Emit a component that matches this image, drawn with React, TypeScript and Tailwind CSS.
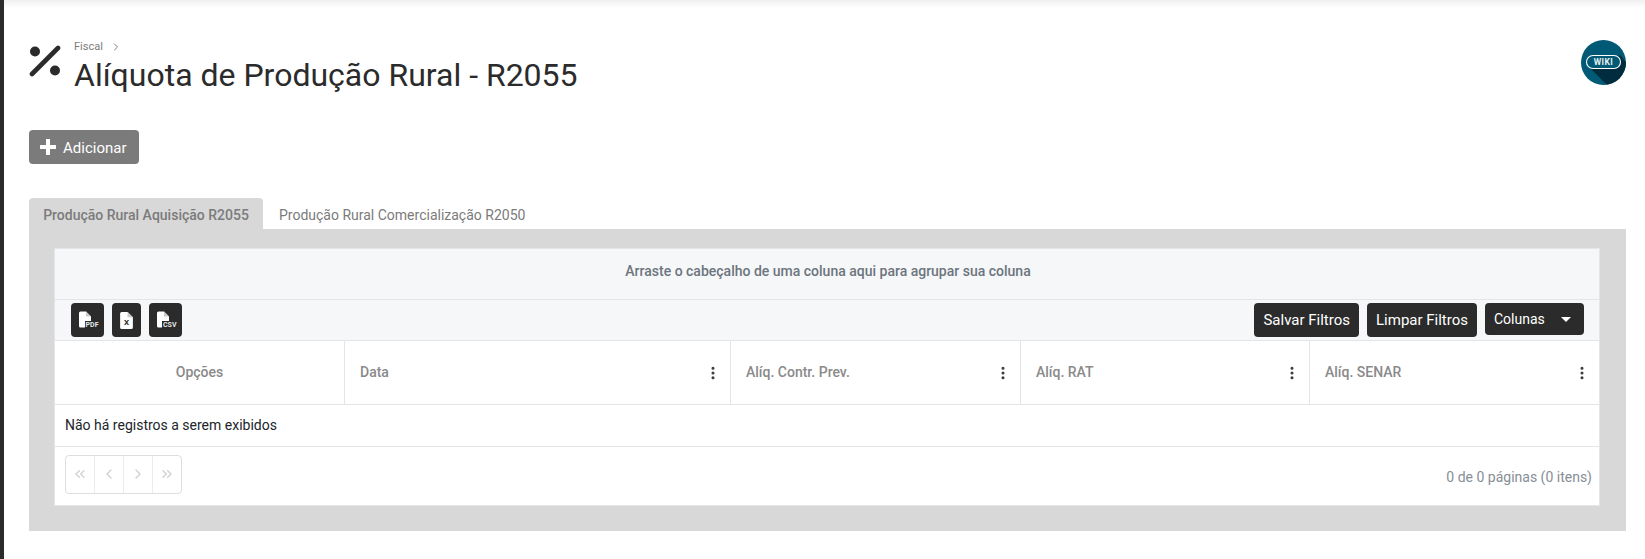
import { ChevronLeft, ChevronRight, ChevronsLeft, ChevronsRight, EllipsisVertical } from 'lucide-react'

const columns = [
  { label: 'Data', width: 'w-[386px]' },
  { label: 'Alíq. Contr. Prev.', width: 'w-[290px]' },
  { label: 'Alíq. RAT', width: 'w-[289px]' },
  { label: 'Alíq. SENAR', width: 'flex-1' },
]

function FileIcon({ tag }: { tag: string }) {
  return (
    <span className="relative block w-[18px] h-[18px] -mt-[1px]">
      <svg width="12" height="17" viewBox="0 0 12 16" className="absolute left-0 top-0">
        <path d="M0 1.5A1.5 1.5 0 0 1 1.5 0H7l5 5v9.5a1.5 1.5 0 0 1-1.5 1.5h-9A1.5 1.5 0 0 1 0 14.5z" fill="#fff" />
        <path d="M7 0v5h5z" fill="#c9c9c9" />
      </svg>
      <span className="absolute right-[-2px] bottom-[0px] bg-[#2b2b2b] pl-[1px] text-[7px] leading-[8px] font-bold text-[#e8e8e8]">{tag}</span>
    </span>
  )
}

function ExportButton({ tag, wide }: { tag: string; wide?: boolean }) {
  return (
    <button className={`${wide ? 'w-[33px]' : 'w-[29px]'} h-[34px] rounded-[4px] bg-[#2b2b2b] flex items-center justify-center`}>
      {tag === 'X' ? (
        <span className="relative block w-[13px] h-[17px]">
          <svg width="13" height="17" viewBox="0 0 12 16" className="absolute left-0 top-0">
            <path d="M0 1.5A1.5 1.5 0 0 1 1.5 0H7l5 5v9.5a1.5 1.5 0 0 1-1.5 1.5h-9A1.5 1.5 0 0 1 0 14.5z" fill="#fff" />
            <path d="M7 0v5h5z" fill="#c9c9c9" />
          </svg>
          <span className="absolute left-[4px] top-[7px] text-[8px] leading-[8px] font-bold text-[#2b2b2b]">X</span>
        </span>
      ) : (
        <FileIcon tag={tag} />
      )}
    </button>
  )
}

function DarkButton({ label }: { label: string }) {
  return (
    <button className="h-[34px] px-[9px] rounded-[4px] bg-[#2b2b2b] text-white text-[15px] leading-none">
      {label}
    </button>
  )
}

function PagerButton({ children }: { children: React.ReactNode }) {
  return (
    <span className="w-[29px] flex items-center justify-center border-r border-[#ececec] last:border-r-0 last:w-[28px] text-[#d0d0d0]">
      {children}
    </span>
  )
}

export default function App() {
  return (
    <div className="flex w-[1645px] h-[559px] overflow-hidden bg-white text-[#212529] font-['Roboto',sans-serif]">
      {/* left rail */}
      <div className="w-[4px] shrink-0 bg-[#2b2b2b]" />

      <div className="flex-1 flex flex-col">
        {/* top shadow */}
        <div className="h-[8px] bg-gradient-to-b from-[#f0f0f0] to-white" />

        <div className="flex-1 pl-[25px] pr-[19px] flex flex-col">
          {/* title */}
          <div className="flex justify-between mt-[32px] h-[90px]">
            <div className="flex">
              <svg width="32" height="32" viewBox="0 0 32 32" className="mt-[5px] shrink-0">
                <circle cx="6" cy="6.5" r="5" fill="#2b2b2b" />
                <circle cx="26" cy="25.5" r="5" fill="#2b2b2b" />
                <path d="M29 3 3 29" stroke="#2b2b2b" strokeWidth="4.6" strokeLinecap="round" />
              </svg>
              <div className="ml-[13px]">
                <div className="flex items-center gap-[7px] h-[14px] text-[11px] text-[#7b7b7b]">
                  Fiscal
                  <ChevronRight size={12} strokeWidth={1.5} className="text-[#555]" />
                </div>
                <h1 className="mt-[2px] text-[32px] leading-[38px] font-normal text-[#2b2b2b]">Alíquota de Produção Rural - R2055</h1>
              </div>
            </div>
            <svg width="45" height="45" viewBox="0 0 45 45" className="shrink-0">
              <defs>
                <clipPath id="wiki-clip">
                  <circle cx="22.5" cy="22.5" r="22.5" />
                </clipPath>
              </defs>
              <circle cx="22.5" cy="22.5" r="22.5" fill="#015a75" />
              <path d="M9 28 27 46H45V22L39 15z" fill="#012c3e" clipPath="url(#wiki-clip)" />
              <rect x="5.5" y="15.5" width="34" height="13" rx="6.5" fill="#015a75" stroke="#fff" strokeWidth="1.1" />
              <text x="22.5" y="25.4" textAnchor="middle" fontSize="8.5" fontWeight="700" letterSpacing="0.4" fill="#e8eef0" fontFamily="Roboto, sans-serif">WIKI</text>
            </svg>
          </div>

          {/* add button */}
          <button className="w-[110px] h-[34px] rounded-[4px] bg-[#7b7b7b] text-white text-[15px] flex items-center pl-[11px] gap-[7px]">
            <svg width="16" height="16" viewBox="0 0 16 16" className="shrink-0">
              <path d="M8 1v14M1 8h14" stroke="#fff" strokeWidth="4" strokeLinecap="round" />
            </svg>
            <span className="pt-[3px]">Adicionar</span>
          </button>

          {/* tabs */}
          <div className="flex mt-[34px] h-[31px] text-[14px]">
            <div className="w-[234px] rounded-t-[4px] bg-[#d8d8d8] flex items-center justify-center font-medium text-[#7b7b7b] pt-[4px]">Produção Rural Aquisição R2055</div>
            <div className="flex items-center pl-[16px] text-[#7b7b7b] pt-[4px]">Produção Rural Comercialização R2050</div>
          </div>

          {/* tab panel */}
          <div className="h-[302px] bg-[#d8d8d8] pt-[19px] pl-[25px] pr-[26px]">
            <div className="h-[258px] bg-white border border-[#e3e5e8] flex flex-col">
              <div className="h-[51px] bg-[#f6f7f9] border-b border-[#e3e5e8] flex items-center justify-center pb-[6px] pl-[2px] text-[14px] font-medium text-[#6c757d]">
                Arraste o cabeçalho de uma coluna aqui para agrupar sua coluna
              </div>

              <div className="h-[41px] bg-[#f6f7f9] border-b border-[#e3e5e8] flex items-center justify-between pl-[16px] pr-[15px]">
                <div className="flex gap-[8px]">
                  <ExportButton tag="PDF" wide />
                  <ExportButton tag="X" />
                  <ExportButton tag="CSV" wide />
                </div>
                <div className="flex gap-[8px]">
                  <DarkButton label="Salvar Filtros" />
                  <DarkButton label="Limpar Filtros" />
                  <button className="w-[99px] h-[32px] rounded-[4px] bg-[#2b2b2b] text-white text-[14px] flex items-center pl-[9px]">
                    Colunas
                    <span className="ml-[16px] border-x-[5px] border-x-transparent border-t-[5px] border-t-white" />
                  </button>
                </div>
              </div>

              <div className="h-[64px] border-b border-[#e3e5e8] flex text-[14px] font-medium text-[#8a8a8a]">
                <div className="w-[290px] border-r border-[#e3e5e8] flex items-center justify-center">Opções</div>
                {columns.map((col, i) => (
                  <div key={col.label} className={`${col.width} ${i < 3 ? 'border-r border-[#e3e5e8]' : ''} flex items-center justify-between pl-[15px] pr-[9px]`}>
                    {col.label}
                    <EllipsisVertical size={16} strokeWidth={2.6} className="text-[#3a3a3a]" />
                  </div>
                ))}
              </div>

              <div className="h-[42px] border-b border-[#e3e5e8] flex items-center pl-[10px] text-[14px]">
                Não há registros a serem exibidos
              </div>

              <div className="flex-1 flex items-center justify-between pl-[10px] pr-[7px] pb-[4px]">
                <div className="flex h-[39px] border border-[#dedede] rounded-[4px]">
                  <PagerButton><ChevronsLeft size={16} /></PagerButton>
                  <PagerButton><ChevronLeft size={16} /></PagerButton>
                  <PagerButton><ChevronRight size={16} /></PagerButton>
                  <PagerButton><ChevronsRight size={16} /></PagerButton>
                </div>
                <span className="text-[14px] text-[#868e96] pt-[6px]">0 de 0 páginas (0 itens)</span>
              </div>
            </div>
          </div>
        </div>
      </div>
    </div>
  )
}
